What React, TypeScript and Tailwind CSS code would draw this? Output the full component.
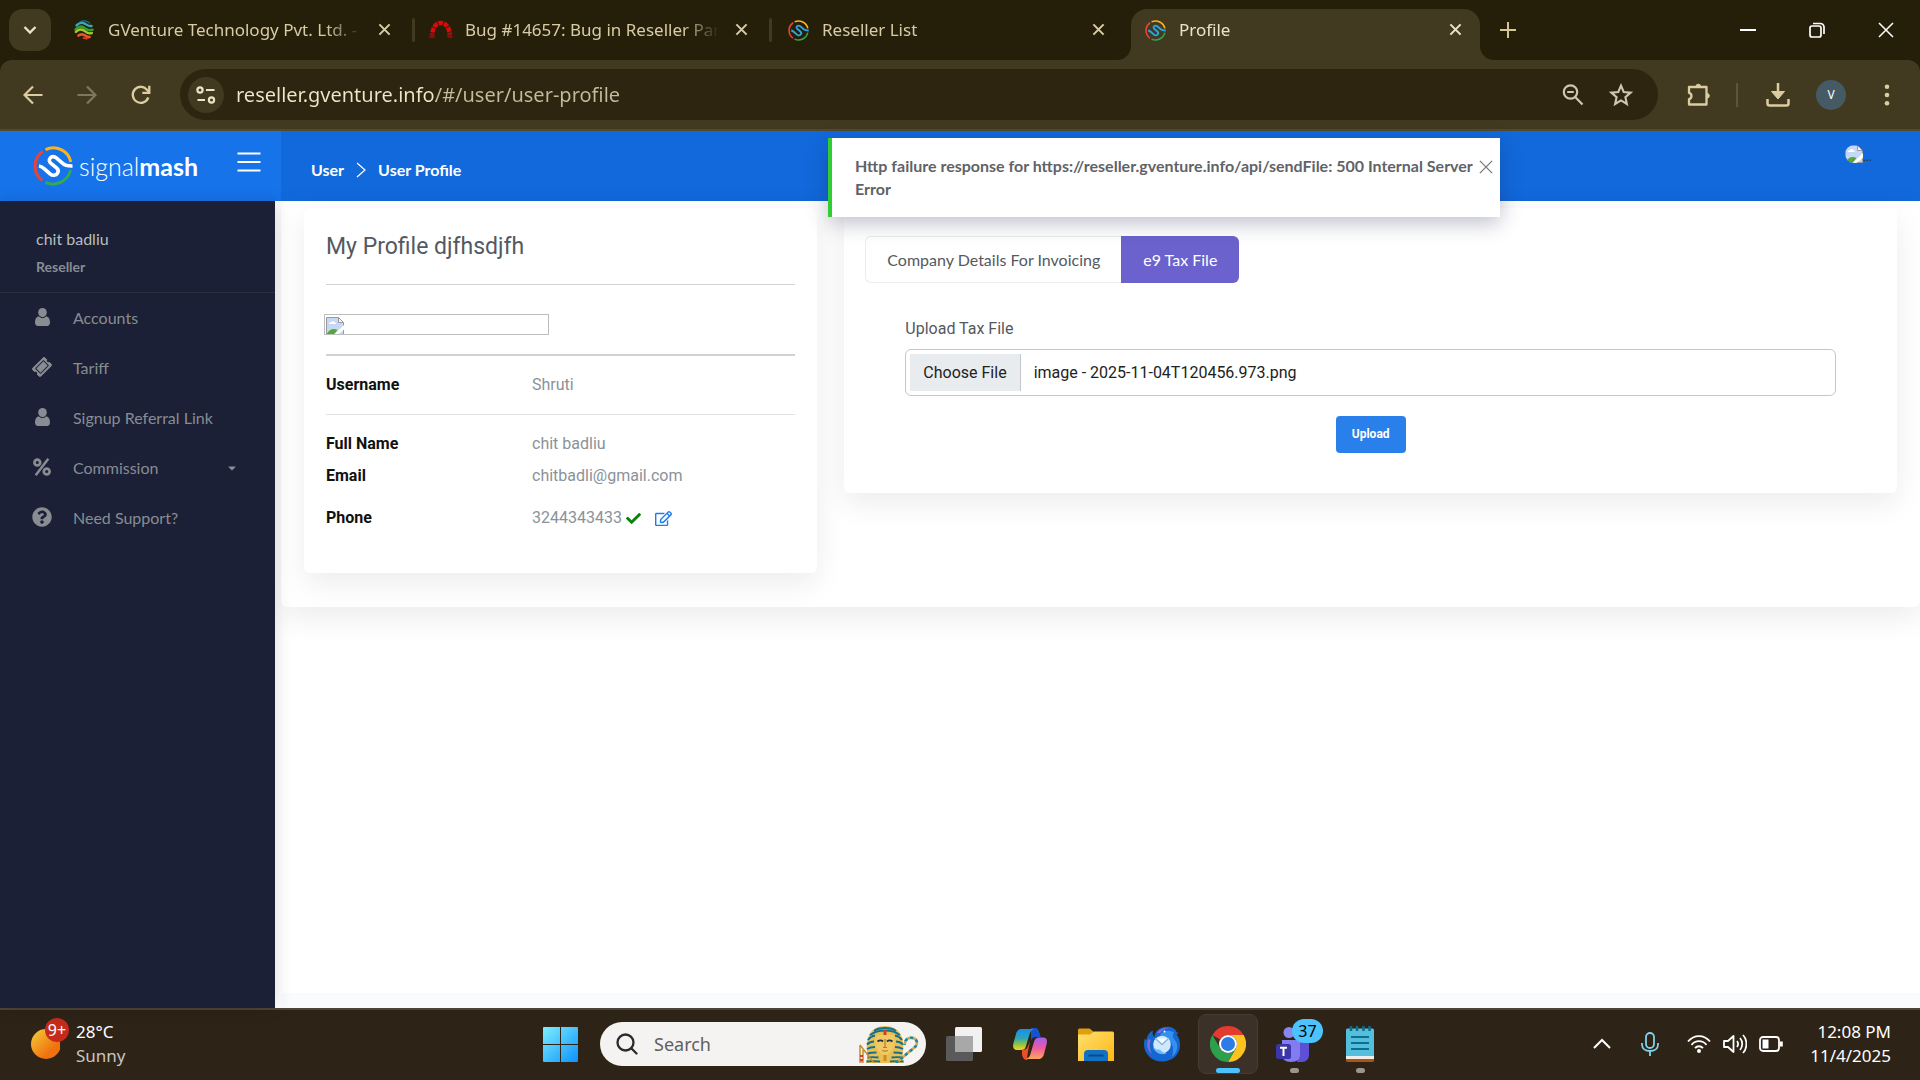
import React from "react";
import { FaTicketAlt, FaQuestionCircle, FaCaretDown, FaCheck, FaRegEdit } from "react-icons/fa";

const CHROME_FONT = "font-['Noto_Sans',sans-serif]";

/* ---------- small drawings ---------- */

function GVentureIcon() {
  return (
    <svg viewBox="0 0 20 20" className="size-5 shrink-0" fill="none" strokeLinecap="round">
      <path d="M6 2C9 .2 13 .8 15.500 3" stroke="#1a6f86" strokeWidth="1.400" />
      <path d="M2.500 5.400C6 1.800 10 2.600 12.500 4.600c1.800 1.400 3.400 1.600 5 1.400" stroke="#35a8c4" strokeWidth="2.400" />
      <path d="M1.600 9.600C5 5.400 8.500 6.200 11.200 8.400c2.200 1.800 4.600 2.200 7.200 1.400" stroke="#3c9a26" strokeWidth="2.600" />
      <path d="M1.800 12C5.500 8.200 8.500 9.200 11.200 11.400c2.200 1.800 4.300 2.400 6.600 1.600" stroke="#9ccc2c" strokeWidth="2.400" />
      <path d="M4.500 15.600c2.800-2.200 5-1.400 7 .2 1.500 1.200 2.700 1.500 4 1.200" stroke="#f0532d" strokeWidth="2.600" />
      <path d="M9.500 18.200c1.200-.2 2.200 0 3.200.6" stroke="#e33b1f" strokeWidth="1.800" />
    </svg>
  );
}

function RedmineIcon() {
  return (
    <svg viewBox="0 0 24 20" className="h-5 w-6 shrink-0" fill="none">
      <path d="M3 18C3 8 6.500 3 12 3s9 5 9 15" stroke="#d60b0b" strokeWidth="4.500" strokeDasharray="4.600 1" />
      <path d="M3 18c0-1.700.1-3 .3-4.300M21 18c0-1.700-.1-3-.3-4.300" stroke="#8f0a0a" strokeWidth="4.500" />
    </svg>
  );
}

function SignalMark({ wave, className }: { wave: string; className: string }) {
  return (
    <svg viewBox="0 0 40 40" className={className} fill="none">
      <path d="M12.500 3.600A18 18 0 0 1 37.800 16" stroke="#fbb51c" strokeWidth="3" />
      <path d="M37.600 24A18 18 0 0 1 12.500 36.400" stroke="#34a853" strokeWidth="3" />
      <path d="M9.400 34.500A18 18 0 0 1 9.800 5.200" stroke="#ea4335" strokeWidth="3" />
      <path
        d="M6 20c2.500.3 4 1.500 6 3.300l5 4.500c2.500 2.200 6 1.800 7.500-.5 1.300-2 .8-4-1-5.500L18 17.300c-2-1.600-2.200-3.700-.9-5.200 1.600-2 4.300-1.800 6.200-.2l6.700 5.800c2.500 2.200 5 2.500 9.500 2.300"
        stroke={wave}
        strokeWidth="3.600"
        strokeLinejoin="round"
      />
    </svg>
  );
}

function Cross({ className }: { className: string }) {
  return (
    <svg viewBox="0 0 14 14" className={className} fill="none" stroke="currentColor" strokeWidth="2.200">
      <path d="M1.500 1.500l11 11M12.500 1.500l-11 11" />
    </svg>
  );
}

function ThinCross({ className }: { className: string }) {
  return (
    <svg viewBox="0 0 16 16" className={className} fill="none" stroke="currentColor" strokeWidth="1.500">
      <path d="M1 1l14 14M15 1L1 15" />
    </svg>
  );
}

function BrokenImage({ className }: { className: string }) {
  return (
    <svg viewBox="0 0 18 18" className={className}>
      <path d="M.5.5h12l5 5v12H.5z" fill="#c5d8f7" stroke="#9a9a9a" />
      <path d="M3 7c0-1.500 1.500-2 2.200-1.500C5.600 3.800 8 3.800 8.400 5.300 9.600 5.200 10 6 10 7z" fill="#fff" />
      <path d="M1 17.500v-1C4 11.500 8 11 11.500 13L8 17.500z" fill="#57a638" />
      <path d="M12.500.5v5h5z" fill="#f3f3f3" stroke="#9a9a9a" />
      <path d="M18.500 7.500 7.500 18h4l7-6z" fill="#fff" />
    </svg>
  );
}

function PersonIcon() {
  return (
    <svg viewBox="0 0 15 18" className="h-[18px] w-[15px]" fill="currentColor">
      <ellipse cx="7.500" cy="4.600" rx="4.300" ry="4.600" />
      <path d="M3.800 8.200C1.200 8.600 0 11 0 14.500 0 16.800 1.200 18 3 18h9c1.800 0 3-1.200 3-3.500 0-3.500-1.200-5.900-3.800-6.300-1 1.200-2.200 1.800-3.700 1.800s-2.700-.6-3.700-1.800z" />
    </svg>
  );
}

function PercentIcon() {
  return (
    <svg viewBox="0 0 18 18" className="size-[18px]" fill="none" stroke="currentColor">
      <circle cx="4.300" cy="4.500" r="2.900" strokeWidth="2.700" />
      <circle cx="13.700" cy="13.500" r="2.900" strokeWidth="2.700" />
      <path d="M15.300.8L2.700 17.200" strokeWidth="2.500" />
    </svg>
  );
}

/* ---------- browser frame ---------- */

type TabInfo = { title: string; icon: React.ReactNode; active?: boolean; divider?: boolean };

const tabs: TabInfo[] = [
  { title: "GVenture Technology Pvt. Ltd. -", icon: <GVentureIcon />, divider: true },
  { title: "Bug #14657: Bug in Reseller Par", icon: <RedmineIcon />, divider: true },
  { title: "Reseller List", icon: <SignalMark wave="#2ba4e0" className="size-[21px] shrink-0" /> },
  { title: "Profile", icon: <SignalMark wave="#2ba4e0" className="size-[21px] shrink-0" />, active: true },
];

function BrowserTab({ tab }: { tab: TabInfo }) {
  const tone = tab.active ? "text-[#eee3c6]" : "text-[#d8cba6]";
  return (
    <div className={`relative flex h-full min-w-0 flex-1 basis-0 max-w-[357px] pt-[9px] ${tab.active ? "px-1" : ""}`}>
      {tab.active && (
        <>
          <svg viewBox="0 0 14 14" className="absolute bottom-0 -left-[10px] size-[14px]" fill="#413a20">
            <path d="M14 0v14H0A14 14 0 0 0 14 0z" />
          </svg>
          <svg viewBox="0 0 14 14" className="absolute -right-[10px] bottom-0 size-[14px]" fill="#413a20">
            <path d="M0 0v14h14A14 14 0 0 1 0 0z" />
          </svg>
        </>
      )}
      <div
        className={`flex min-w-0 flex-1 items-center pb-[9px] ${
          tab.active ? "rounded-t-2xl bg-[#413a20] pr-4 pl-3" : "pr-5 pl-4"
        }`}
      >
        <div className="flex w-6 shrink-0 justify-center">{tab.icon}</div>
        <span
          className={`ml-3 min-w-0 flex-1 overflow-hidden text-[17px] leading-6 whitespace-nowrap [mask-image:linear-gradient(to_right,black_calc(100%-36px),transparent)] ${tone}`}
        >
          {tab.title}
        </span>
        <button type="button" aria-label="Close tab" className={`mb-[2px] ml-[14px] p-[2px] ${tone}`}>
          <Cross className="size-[13px]" />
        </button>
      </div>
      {tab.divider && <span className="absolute top-[18px] -right-[2px] h-6 w-[3px] rounded bg-[#413a20]" />}
    </div>
  );
}

function TabStrip() {
  return (
    <div className="flex h-[60px] items-stretch bg-[#251f0a]">
      <button
        type="button"
        aria-label="Search tabs"
        className="mt-[9px] mr-[5px] ml-[9px] flex h-[42px] w-[42px] shrink-0 items-center justify-center rounded-[14px] bg-[#413a20] text-[#eee3c6]"
      >
        <svg viewBox="0 0 14 14" className="size-[14px]" fill="none" stroke="currentColor" strokeWidth="2.300">
          <path d="M1.500 4l5.500 5.500L12.500 4" />
        </svg>
      </button>
      {tabs.map((t) => (
        <BrowserTab key={t.title} tab={t} />
      ))}
      <button type="button" aria-label="New tab" className="ml-4 shrink-0 text-[#d8c796]">
        <svg viewBox="0 0 16 16" className="size-4" fill="none" stroke="currentColor" strokeWidth="2">
          <path d="M8 0v16M0 8h16" />
        </svg>
      </button>
      <div className="ml-auto flex shrink-0 items-center text-white">
        <button type="button" aria-label="Minimize" className="flex h-full w-[69px] items-center justify-center">
          <svg viewBox="0 0 16 16" className="size-4" stroke="currentColor" strokeWidth="2">
            <path d="M0 8h16" />
          </svg>
        </button>
        <button type="button" aria-label="Restore" className="flex h-full w-[69px] items-center justify-center">
          <svg viewBox="0 0 16 16" className="size-4" fill="none" stroke="currentColor" strokeWidth="1.700">
            <rect x="1" y="4" width="11" height="11" rx="2" />
            <path d="M4 1.500h7.500a3.500 3.500 0 0 1 3.500 3.500V12" />
          </svg>
        </button>
        <button type="button" aria-label="Close window" className="flex h-full w-[69px] items-center justify-center">
          <ThinCross className="size-4" />
        </button>
      </div>
    </div>
  );
}

function Toolbar() {
  return (
    <div className="bg-[#251f0a]">
      <div className="flex h-[71px] items-center rounded-t-xl border-b-2 border-[#504a30] bg-[#413a20] pr-6 text-[#dccca0]">
        <button type="button" aria-label="Back" className="ml-5 flex w-[26px] justify-center">
          <svg viewBox="0 0 20 20" className="size-5" fill="none" stroke="currentColor" strokeWidth="2.200">
            <path d="M19.500 10H2M10 1.500L1.500 10l8.500 8.500" />
          </svg>
        </button>
        <button type="button" aria-label="Forward" className="ml-7 flex w-[26px] justify-center text-[#80765a]">
          <svg viewBox="0 0 20 20" className="size-5" fill="none" stroke="currentColor" strokeWidth="2.200">
            <path d="M.5 10H18M10 1.500l8.500 8.500-8.500 8.500" />
          </svg>
        </button>
        <button type="button" aria-label="Reload" className="ml-7 flex w-[26px] justify-center">
          <svg viewBox="0 0 20 20" className="size-5" fill="none" stroke="currentColor" strokeWidth="2.300">
            <path d="M17.300 12.500A8 8 0 1 1 16.200 5L18 7" />
            <path d="M18.300.8v7h-7" />
          </svg>
        </button>
        <div className="ml-[26px] flex h-[51px] min-w-0 flex-1 items-center rounded-full bg-[#2d250f] pr-[25px] pl-2">
          <button
            type="button"
            aria-label="Site information"
            className="flex size-9 shrink-0 items-center justify-center rounded-full bg-[#413a20] text-[#eee3c6]"
          >
            <svg viewBox="0 0 20 18" className="h-[18px] w-5" fill="none" stroke="currentColor" strokeWidth="2.200">
              <circle cx="4" cy="4" r="2.600" />
              <path d="M10 4h8.500M1.500 14H9" />
              <circle cx="15.500" cy="14" r="2.600" />
            </svg>
          </button>
          <input
            type="text"
            aria-label="Address"
            defaultValue="reseller.gventure.info/#/user/user-profile"
            className="ml-3 min-w-0 flex-1 bg-[linear-gradient(to_right,#f1e6ca_200px,#c5bb9c_200px)] bg-clip-text text-xl leading-7 text-transparent outline-none"
          />
          <button type="button" aria-label="Zoom" className="text-[#d0c5b0]">
            <svg viewBox="0 0 22 22" className="size-[22px]" fill="none" stroke="currentColor" strokeWidth="2.200">
              <circle cx="8.500" cy="8" r="6.700" />
              <path d="M13.200 13l7.300 7.500M5.200 8h6.600" />
            </svg>
          </button>
          <button type="button" aria-label="Bookmark" className="ml-[25px] text-[#d0c5b0]">
            <svg viewBox="0 0 24 24" className="size-6" fill="none" stroke="currentColor" strokeWidth="2.100">
              <path d="M12 2.600l2.700 6.400 6.900.6-5.200 4.600 1.500 6.800-5.900-3.600L6.100 21l1.500-6.800L2.400 9.600 9.300 9z" />
            </svg>
          </button>
        </div>
        <button type="button" aria-label="Extensions" className="ml-7">
          <svg viewBox="0 0 26 26" className="size-[26px]" fill="none" stroke="currentColor" strokeWidth="2.300" strokeLinejoin="round">
            <path d="M3 5h17.500v17.500H3v-5.300a3.300 3.300 0 0 0 0-6.400z" />
            <path d="M10 4.500a2.300 2.300 0 0 1 4.600 0zM21 11.500a2.300 2.300 0 0 1 0 4.600z" fill="currentColor" strokeWidth="1" />
          </svg>
        </button>
        <span className="ml-6 h-6 w-[2px] bg-[#5e5536]" />
        <button type="button" aria-label="Downloads" className="ml-7">
          <svg viewBox="0 0 24 24" className="size-6" fill="none" stroke="currentColor" strokeWidth="2.500">
            <path d="M12 0v13M1.500 16v4.500a2 2 0 0 0 2 2h17a2 2 0 0 0 2-2V16" />
            <path d="M5.500 8.500h13L12 16z" fill="currentColor" strokeWidth="1" />
          </svg>
        </button>
        <button
          type="button"
          aria-label="Browser profile"
          className="ml-[26px] flex size-[30px] items-center justify-center rounded-full bg-[#455a64] text-xs text-white"
        >
          V
        </button>
        <button type="button" aria-label="Menu" className="ml-8 px-[6px]">
          <svg viewBox="0 0 6 22" className="h-[22px] w-[6px]" fill="currentColor">
            <circle cx="3" cy="2.700" r="2.300" />
            <circle cx="3" cy="11" r="2.300" />
            <circle cx="3" cy="19.300" r="2.300" />
          </svg>
        </button>
      </div>
    </div>
  );
}

/* ---------- web page ---------- */

const nav = [
  { label: "Accounts", icon: <PersonIcon /> },
  { label: "Tariff", icon: <FaTicketAlt className="size-[18px] -rotate-45" /> },
  { label: "Signup Referral Link", icon: <PersonIcon /> },
  { label: "Commission", icon: <PercentIcon />, expandable: true },
  { label: "Need Support?", icon: <FaQuestionCircle className="size-5" /> },
];

function Sidebar() {
  return (
    <aside className="z-10 w-[275px] shrink-0 bg-[#1b2036] font-['Lato',sans-serif] shadow-[0_0_16px_rgba(0,0,0,0.14)]">
      <div className="border-b border-[#2a2f40] px-9 pt-[26px] pb-[13px]">
        <div className="text-base leading-6 text-[#b9bdbe]">chit badliu</div>
        <div className="mt-1 text-sm leading-6 font-bold text-[#878d92]">Reseller</div>
      </div>
      <nav className="flex flex-col gap-[3px]">
        {nav.map((n) => (
          <a key={n.label} href="#" className="flex h-[47px] items-center text-base text-[#878d92] first:mt-px">
            <span className="mb-[2px] ml-7 flex w-7 justify-center">{n.icon}</span>
            <span className="ml-[17px]">{n.label}</span>
            {n.expandable && <FaCaretDown className="mr-[37px] ml-auto size-3" />}
          </a>
        ))}
      </nav>
    </aside>
  );
}

function PageHeader() {
  return (
    <header className="flex h-[70px] shrink-0 bg-[#1269db] font-['Lato',sans-serif] text-white">
      <div className="flex w-[281px] shrink-0 bg-[#1673ea]">
        <a href="#" className="ml-[33px] flex items-center">
          <SignalMark wave="#ffffff" className="size-10" />
          <span className="ml-[6px] text-[25px] leading-8 font-light">
            signal<span className="font-bold">mash</span>
          </span>
        </a>
        <button type="button" aria-label="Toggle menu" className="mr-5 mb-[9px] ml-auto">
          <svg viewBox="0 0 24 20" className="h-5 w-6" stroke="currentColor" strokeWidth="2">
            <path d="M.5 1.500h23M.5 10h23M.5 18.500h23" />
          </svg>
        </button>
      </div>
      <nav aria-label="Breadcrumb" className="ml-[30px] flex items-center gap-3 pt-2 text-base leading-6 font-bold">
        <a href="#">User</a>
        <svg viewBox="0 0 10 16" className="h-4 w-[10px]" fill="none" stroke="currentColor" strokeWidth="1.200">
          <path d="M1 1l8 7-8 7" />
        </svg>
        <a href="#">User Profile</a>
      </nav>
      <div className="mt-3 mr-[47px] ml-auto flex h-5 w-7 items-end">
        <BrokenImage className="size-[18px] rounded-l-full rounded-tr-full" />
        <span className="text-xs leading-3 text-[#333]">...</span>
      </div>
    </header>
  );
}

function Toast() {
  return (
    <div
      role="alert"
      className="absolute top-[7px] left-1/2 z-20 flex w-[672px] -translate-x-[132px] border-l-4 border-[#32cd32] bg-white pt-4 pb-[17px] pl-[23px] font-['Lato',sans-serif] shadow-[0_6px_20px_rgba(20,30,70,0.28)]"
    >
      <p className="w-[624px] shrink-0 text-base leading-[23px] font-bold text-[#5f6368]">
        Http failure response for https://reseller.gventure.info/api/sendFile: 500 Internal Server Error
      </p>
      <button type="button" aria-label="Dismiss" className="mt-[6px] shrink-0 self-start text-[#777]">
        <ThinCross className="size-[14px]" />
      </button>
    </div>
  );
}

const CARD = "rounded-md bg-white shadow-[0_10px_30px_rgba(0,0,0,0.08)]";

function Field({ label, children, gap }: { label: string; children: React.ReactNode; gap: string }) {
  return (
    <div className={`flex leading-6 ${gap}`}>
      <dt className="w-[206px] shrink-0 font-bold text-[#111]">{label}</dt>
      <dd className="flex items-center text-[#8a9299]">{children}</dd>
    </div>
  );
}

function ProfileCard() {
  return (
    <section className={`${CARD} px-[22px] pt-[23px] pb-[43px]`}>
      <h1 className="text-[23px] leading-8 text-[#54595f]">My Profile djfhsdjfh</h1>
      <hr className="mt-[21px] border-[#d2d2d2]" />
      <div className="mt-[29px] -ml-[2px] h-[21px] w-[225px] overflow-hidden border border-[#bdbdbd] pt-[2px] pl-px">
        <BrokenImage className="size-[18px]" />
      </div>
      <hr className="mt-[19px] border-t-2 border-[#d2d2d2]" />
      <dl className="text-base">
        <Field label="Username" gap="mt-[17px]">
          Shruti
        </Field>
        <hr className="mt-[17px] border-[#e2e2e2]" />
        <Field label="Full Name" gap="mt-[17px]">
          chit badliu
        </Field>
        <Field label="Email" gap="mt-2">
          chitbadli@gmail.com
        </Field>
        <Field label="Phone" gap="mt-[18px]">
          3244343433
          <FaCheck className="ml-1 size-[15px] text-[#0a830a]" />
          <button type="button" aria-label="Edit phone" className="ml-[14px] text-[#1c7cf0]">
            <FaRegEdit className="size-[17px]" />
          </button>
        </Field>
      </dl>
    </section>
  );
}

function TaxCard() {
  return (
    <section className={`${CARD} px-[21px] pt-[28px] pb-10`}>
      <div className="flex font-['Lato',sans-serif] text-base leading-[23px]">
        <button type="button" className="rounded-l-md border border-r-0 border-[#ececec] px-[21px] py-[11px] text-[#54595f]">
          Company Details For Invoicing
        </button>
        <button type="button" className="rounded-r-md bg-[#6b62cd] px-[22px] text-white">
          e9 Tax File
        </button>
      </div>
      <form className="mx-10 mt-[34px] flex flex-col" onSubmit={(e) => e.preventDefault()}>
        <label htmlFor="tax-file" className="text-base leading-6 text-[#54595f]">
          Upload Tax File
        </label>
        <input id="tax-file" type="file" className="sr-only" />
        <label
          htmlFor="tax-file"
          className="mt-2 flex cursor-pointer items-center rounded-md border border-[#c4c6c9] p-1 text-base leading-[23px] text-[#222]"
        >
          <span className="border-r border-[#c4c6c9] bg-[#e9ecef] px-[13px] py-[7px]">Choose File</span>
          <span className="ml-[13px]">image - 2025-11-04T120456.973.png</span>
        </label>
        <button
          type="submit"
          className="mt-5 self-center rounded bg-[#2a80eb] px-4 py-[10px] text-xs leading-[17px] font-bold text-white"
        >
          Upload
        </button>
      </form>
    </section>
  );
}

function WebPage() {
  return (
    <div className="relative flex flex-1 flex-col bg-white font-['Roboto',sans-serif]">
      <PageHeader />
      <Toast />
      <div className="flex flex-1">
        <Sidebar />
        <div className="flex min-w-0 flex-1 flex-col pl-[6px]">
          <main className="rounded-b-md bg-white px-[9px] pt-[7px] pb-[34px] shadow-[0_10px_30px_rgba(0,0,0,0.08)]">
            <div className="grid grid-cols-3 items-start">
              <div className="pr-[13px] pl-[14px]">
                <ProfileCard />
              </div>
              <div className="col-span-2 px-[14px]">
                <TaxCard />
              </div>
            </div>
          </main>
          <footer className="mt-auto h-[15px] bg-[#fafbfd]" />
        </div>
      </div>
    </div>
  );
}

/* ---------- desktop taskbar ---------- */

function WindowsLogo() {
  return (
    <svg viewBox="0 0 35 35" className="size-[35px]">
      <defs>
        <linearGradient id="win" x1="0" y1="0" x2="35" y2="35" gradientUnits="userSpaceOnUse">
          <stop stopColor="#7deeff" />
          <stop offset="1" stopColor="#0c92fb" />
        </linearGradient>
      </defs>
      <path d="M0 1a1 1 0 0 1 1-1h16v17H0zM18 0h16a1 1 0 0 1 1 1v16H18zM0 18h17v17H1a1 1 0 0 1-1-1zM18 18h17v16a1 1 0 0 1-1 1H18z" fill="url(#win)" />
    </svg>
  );
}

function Pharaoh() {
  return (
    <svg viewBox="0 0 60 38" className="h-[38px] w-[60px]" fill="none">
      <path d="M7 38c1-3 1.500-6 1.500-9C7 22 7.500 15 10 10 13 4 19 1 26 1s13 3 16 9c2.500 5 3 12 1.500 19 0 3 .5 6 1.500 9z" fill="#e9c04f" />
      <g stroke="#14708f" strokeWidth="1.900">
        <path d="M15 6C18 3.500 22 3 26 3s8 .5 11 3M11 10c8-6 22-6 30 0M9 15c2-3 4-4 7-4.500M43 15c-2-3-4-4-7-4.500M8 19.500c2-2 4-3 7-3M44 19.500c-2-2-4-3-7-3M8 24c2.500-1.500 5-2 8-2M44 24c-2.500-1.500-5-2-8-2M8.500 28.500c3-1 5.500-1 9-1M43.500 28.500c-3-1-5.500-1-9-1M8.500 32.500c3-.5 7-.5 11 0M43.500 32.500c-3-.5-7-.5-11 0M7.500 36.500c4-.5 9-.5 13.500 0M44.500 36.500c-4-.5-9-.5-13.500 0" />
      </g>
      <path d="M17 11c6-2.500 12-2.500 18 0 1.800 7.500-.5 14.500-6 18q-3 1.800-6 0c-5.500-3.500-7.800-10.500-6-18z" fill="#f2c964" />
      <path d="M26 14v8.500M24 22.500h4M23 25.500q3 1.200 6 0" stroke="#b97a28" strokeWidth="1.200" />
      <path d="M18.500 16.500c2-1.500 4-1.500 5.500 0M28 16.500c1.500-1.500 3.500-1.500 5.500 0" stroke="#1c3440" strokeWidth="1.800" />
      <path d="M26 30v6" stroke="#c98b2e" strokeWidth="3" />
      <path d="M24.500 5h3v5h-3z" fill="#c8452c" />
      <path d="M1 20l14 18M1 20v17h3V25" stroke="#c98b2e" strokeWidth="1.500" />
      <path d="M1 31h3M1 35h3" stroke="#cc4030" strokeWidth="2" />
      <path d="M37 38l13.500-11.500c4-3 7.500-5.500 7.500-8.500 0-6-9-7-11.500-2l-1 4" stroke="#d8a94c" strokeWidth="2.600" />
      <path d="M37 38l13.500-11.500c4-3 7.500-5.500 7.500-8.500 0-6-9-7-11.500-2l-1 4" stroke="#1d87a3" strokeWidth="2.600" strokeDasharray="3 3" />
    </svg>
  );
}

function TaskView() {
  return (
    <svg viewBox="0 0 36 34" className="h-[34px] w-9">
      <rect x="9" y="0" width="27" height="25" rx="1.500" fill="#f1f1f1" />
      <rect x="0" y="9" width="27" height="25" rx="1.500" fill="#5a5a5a" />
      <rect x="9" y="9" width="18" height="16" fill="#a8a8a8" />
    </svg>
  );
}

function Copilot() {
  return (
    <svg viewBox="0 0 34 32" className="h-8 w-[34px]">
      <defs>
        <linearGradient id="cpA" x1="0" y1="0" x2="0" y2="1">
          <stop stopColor="#1590f0" />
          <stop offset=".45" stopColor="#30a4b8" />
          <stop offset=".75" stopColor="#96c63a" />
          <stop offset="1" stopColor="#f3d32a" />
        </linearGradient>
        <linearGradient id="cpB" x1="0" y1="0" x2="0" y2="1">
          <stop stopColor="#a35cf2" />
          <stop offset=".5" stopColor="#ee5c9d" />
          <stop offset="1" stopColor="#fda65a" />
        </linearGradient>
      </defs>
      <path d="M18 0h4c3 0 3.500 2 4.500 5l1.200 4H23c-3 0-4 1-5 4z" fill="#1752c8" />
      <path d="M9 1h12c-3 1-4 3-5 7l-3 10c-1 3-2 4-5 4H4c-4 0-4.500-3-3.500-7L3 6c1-3.500 2.500-5 6-5z" fill="url(#cpA)" />
      <path d="M9 22c3 0 5-1 6-4l2-5c-1 6-4 19-2 19h-1c-3 0-4-2-5-5z" fill="#e8502a" />
      <path d="M25 31H13c3-1 4-3 5-7l3-10c1-3 2-4.500 5-4.500h4c4 0 4.500 3 3.500 7L31 26c-1 3.500-2.500 5-6 5z" fill="url(#cpB)" />
    </svg>
  );
}

function Explorer() {
  return (
    <svg viewBox="0 0 36 33" className="h-[33px] w-9">
      <defs>
        <linearGradient id="fold" x1="0" y1="0" x2="1" y2="1">
          <stop stopColor="#ffdf72" />
          <stop offset="1" stopColor="#fdb813" />
        </linearGradient>
      </defs>
      <path d="M0 2a1.500 1.500 0 0 1 1.500-1.500h10L16 4v6H0z" fill="#dfa00b" />
      <path d="M0 6.500h12l4-3h18.500A1.500 1.500 0 0 1 36 5v28H0z" fill="url(#fold)" />
      <path d="M6 33V26a4 4 0 0 1 4-4h16a4 4 0 0 1 4 4v7z" fill="#0f72c4" />
      <path d="M10.500 27.500h15" stroke="#0a4a8a" strokeWidth="2" />
    </svg>
  );
}

function Thunderbird() {
  return (
    <svg viewBox="0 0 36 36" className="size-9">
      <path
        d="M1 12c.5 1.500 1 2 1.500 2.500C3 10 5 6 9 4.500 8 8 9 10 10.500 11 11 5 16 .8 23 .8c5 0 8.500 2 9.500 5.200l2 1.500-2 .8C35 11.500 36 15 36 19c0 10-8 16.500-18 16.500S0 28 0 18.500C0 16 .3 14 1 12z"
        fill="#1566d0"
      />
      <path d="M16 8.500c4-4 9-5 14-2-2 4-1 5 2 9 2.500 5 1 12-4 15 2-7 1-13-3-16s-8-2.500-9-6z" fill="#3390f0" />
      <path d="M13 7c2-3.500 6-5.500 12-5.200-4 .7-7 2.500-9 5.500zM4 13c-2 7 0 12 4 15-2-5-3-9-1-14z" fill="#7c6bd8" />
      <circle cx="18" cy="18.500" r="8.800" fill="#cfe8fb" />
      <path d="M11.500 12.500l6.500 6 6.500-6" stroke="#8ab7dd" strokeWidth="1.500" fill="#f3faff" />
      <path d="M9 21c2 6 8 8.500 14 6.500-4-.5-5.500-2-7-4-2 .5-5-.5-7-2.500z" fill="#6bb8f8" />
      <circle cx="20.500" cy="5.500" r="1" fill="#fff" />
    </svg>
  );
}

function ChromeLogo() {
  return (
    <svg viewBox="0 0 36 36" className="size-9">
      <path d="M18 0a18 18 0 0 1 15.600 9H18a9 9 0 0 0-7.800 4.500L2.400 9A18 18 0 0 1 18 0z" fill="#e33b2e" />
      <path d="M33.600 9A18 18 0 0 1 18 36l7.800-13.500A9 9 0 0 0 18 9z" fill="#fcc31e" />
      <path d="M18 36A18 18 0 0 1 2.400 9l7.800 13.500A9 9 0 0 0 25.800 22.500z" fill="#2da04c" />
      <circle cx="18" cy="18" r="9" fill="#fff" />
      <circle cx="18" cy="18" r="7" fill="#2c7be9" />
    </svg>
  );
}

function Teams() {
  return (
    <svg viewBox="0 0 34 35" className="mr-[2px] h-[35px] w-[34px]">
      <circle cx="13" cy="5.500" r="5.500" fill="#8a86ee" />
      <path d="M21 14h12v14c0 4-3 7-7 7h-5z" fill="#5d4fd6" />
      <path d="M6 13h15c2 0 3 1 3 3v12c0 4-3 7-9 7S6 32 6 28z" fill="#837bf0" />
      <rect x="0" y="17" width="15" height="15" rx="2.500" fill="#3d36a8" />
      <path d="M4 20.800h7M7.500 20.800v8.200" stroke="#fff" strokeWidth="2" />
    </svg>
  );
}

function Notepad() {
  return (
    <svg viewBox="0 0 28 36" className="h-9 w-7">
      <path d="M0 33h28v1.500a1.500 1.500 0 0 1-1.500 1.500h-25A1.500 1.500 0 0 1 0 34.500z" fill="#b0530d" />
      <path d="M0 29h28v4H0z" fill="#ededed" />
      <path d="M0 4a1.500 1.500 0 0 1 1.500-1.500h25A1.500 1.500 0 0 1 28 4v26H0z" fill="#54bfdd" />
      <path d="M5 11h18M5 17h18M5 23h18" stroke="#0d6d8c" strokeWidth="2" />
      <path d="M5 0v5M11 0v5M17.500 0v5M23.500 0v5" stroke="#0d6d8c" strokeWidth="2.500" />
    </svg>
  );
}

type TaskApp = { name: string; icon: React.ReactNode; active?: boolean; running?: boolean; badge?: string };

const apps: TaskApp[] = [
  { name: "Task view", icon: <TaskView /> },
  { name: "Copilot", icon: <Copilot /> },
  { name: "File Explorer", icon: <Explorer /> },
  { name: "Thunderbird", icon: <Thunderbird /> },
  { name: "Chrome", icon: <ChromeLogo />, active: true },
  { name: "Teams", icon: <Teams />, running: true, badge: "37" },
  { name: "Notepad", icon: <Notepad />, running: true },
];

function TaskButton({ app }: { app: TaskApp }) {
  return (
    <button
      type="button"
      aria-label={app.name}
      className={`relative mx-[3px] flex h-[60px] w-[60px] items-center justify-center rounded-lg border ${
        app.active ? "border-[#463c30] bg-[#3c3128]" : "border-transparent"
      }`}
    >
      {app.icon}
      {app.badge && (
        <span className="absolute top-1 left-[27px] flex h-6 w-[31px] items-center justify-center rounded-full bg-[#4cc2ff] text-base leading-6 text-black">
          {app.badge}
        </span>
      )}
      {app.active && <span className="absolute bottom-0 h-[5px] w-6 rounded-full bg-[#4cc2ff]" />}
      {app.running && <span className="absolute bottom-0 h-[5px] w-[9px] rounded-full bg-[#9d958b]" />}
    </button>
  );
}

function Taskbar() {
  return (
    <footer className="grid h-[72px] shrink-0 grid-cols-[1fr_auto_1fr] items-center border-t-2 border-[#4d453b] bg-[#2e2317] pb-[2px] text-white">
      <div className="flex items-center pl-[30px]">
        <div className="relative size-[30px]">
          <svg viewBox="0 0 30 30" className="size-[30px]">
            <defs>
              <linearGradient id="sun" x1="0" y1="0" x2="1" y2="1">
                <stop stopColor="#f5cf3a" />
                <stop offset=".7" stopColor="#f0710f" />
              </linearGradient>
            </defs>
            <circle cx="16" cy="15" r="15" fill="url(#sun)" />
          </svg>
          <span className="absolute -top-[11px] left-[15px] flex size-6 items-center justify-center rounded-full bg-[#c42b1c] text-base leading-6">
            9+
          </span>
        </div>
        <div className="ml-4 text-[17px] leading-6">
          <div>28°C</div>
          <div className="text-[#c9c5c0]">Sunny</div>
        </div>
      </div>
      <div className="flex items-center">
        <button type="button" aria-label="Start" className="flex w-[66px] justify-center">
          <WindowsLogo />
        </button>
        <div className="mr-[5px] ml-[7px] flex h-11 w-[326px] items-center rounded-full bg-[#f4f3f1] pr-[7px] pl-4">
          <svg viewBox="0 0 22 22" className="size-[22px] shrink-0" fill="none" stroke="#2b2b2b" strokeWidth="2.300" strokeLinecap="round">
            <circle cx="9.500" cy="9.500" r="8" />
            <path d="M15.500 15.500l5 5" />
          </svg>
          <input
            aria-label="Search"
            placeholder="Search"
            className="ml-4 min-w-0 flex-1 bg-transparent text-lg leading-6 outline-none placeholder:text-[#5f5f5f]"
          />
          <Pharaoh />
        </div>
        {apps.map((a) => (
          <TaskButton key={a.name} app={a} />
        ))}
      </div>
      <div className="flex items-center justify-end pr-[29px]">
        <button type="button" aria-label="Show hidden icons">
          <svg viewBox="0 0 18 12" className="h-3 w-[18px]" fill="none" stroke="currentColor" strokeWidth="2">
            <path d="M1 10l8-8 8 8" />
          </svg>
        </button>
        <svg viewBox="0 0 18 24" className="ml-[30px] h-6 w-[18px]" fill="none" stroke="#7fd3ec" strokeWidth="1.800">
          <rect x="5" y="1" width="8" height="15" rx="4" />
          <path d="M1 11v1.500c0 4 3.500 6.500 8 6.500s8-2.500 8-6.500V11M9 19v5" />
        </svg>
        <svg viewBox="0 0 24 20" className="ml-7 h-5 w-6" fill="none" stroke="currentColor" strokeWidth="1.800">
          <path d="M1 7.500c6-7.300 16-7.300 22 0M4.500 10.800c4.200-4.800 10.800-4.800 15 0M8 14.200c2.300-2.600 5.700-2.600 8 0" />
          <circle cx="12" cy="17" r="2" fill="currentColor" stroke="none" />
        </svg>
        <svg viewBox="0 0 24 20" className="ml-3 h-5 w-6" fill="none" stroke="currentColor" strokeWidth="1.800" strokeLinejoin="round">
          <path d="M1 7v6h4l5.500 5V2L5 7zM14 7c1.300 1.800 1.300 4.200 0 6M17 4c3 3.500 3 8.500 0 12M20 1c4.500 5 4.500 13 0 18" />
        </svg>
        <svg viewBox="0 0 24 16" className="ml-3 h-4 w-6" fill="none" stroke="currentColor" strokeWidth="1.800">
          <rect x="1" y="1" width="19" height="14" rx="3" />
          <rect x="3.500" y="3.500" width="6" height="9" fill="currentColor" stroke="none" />
          <path d="M22.300 5.500v5" strokeWidth="3" />
        </svg>
        <div className="ml-[27px] text-right text-[17px] leading-6">
          <div>12:08 PM</div>
          <div>11/4/2025</div>
        </div>
      </div>
    </footer>
  );
}

export default function App() {
  return (
    <div className={`flex min-h-screen flex-col ${CHROME_FONT}`}>
      <TabStrip />
      <Toolbar />
      <WebPage />
      <Taskbar />
    </div>
  );
}
